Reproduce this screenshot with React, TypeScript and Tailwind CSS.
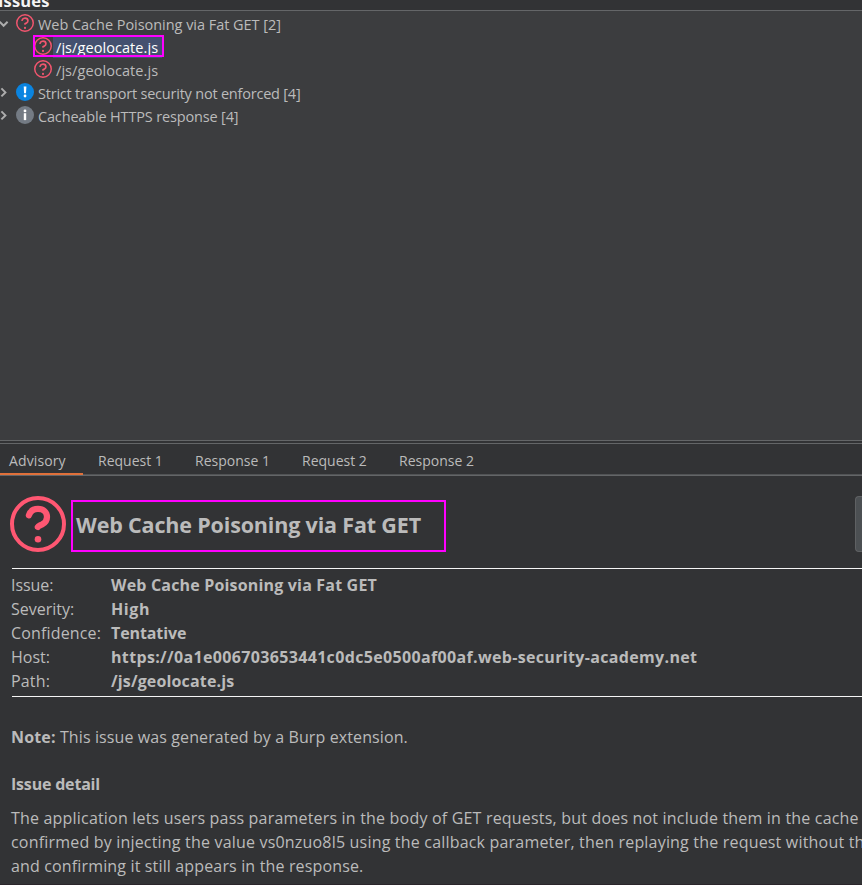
import type { ReactNode } from "react";

function QuestionIcon({ size, stroke, color }: { size: number; stroke: number; color: string }) {
  return (
    <svg width={size} height={size} viewBox="0 0 56 56" fill="none" className="block shrink-0" stroke={color}>
      <circle cx="28" cy="28" r={28 - stroke / 2} strokeWidth={stroke} />
      <path
        d="M18.9 19.3C20.3 15.1 24 12.9 28 12.9C33.6 12.9 37 16.6 37 21C37 24.6 35 26.8 32.4 28.2C30.2 29.4 28.3 29.9 27.8 31"
        strokeWidth={size > 20 ? 6.2 : 5.4}
        strokeLinecap="round"
        strokeLinejoin="round"
      />
      <circle cx="28" cy="43.2" r="3.3" fill={color} stroke="none" />
    </svg>
  );
}

function LowIcon() {
  return (
    <svg width="18" height="18" viewBox="0 0 18 18" className="block shrink-0">
      <circle cx="9" cy="9" r="9" fill="#0a84e0" />
      <path d="M7.7 3.4h2.7l-.4 6.8H8.1z" fill="#fff" />
      <circle cx="9.05" cy="13" r="1.4" fill="#fff" />
    </svg>
  );
}

function InfoIcon() {
  return (
    <svg width="18" height="18" viewBox="0 0 18 18" className="block shrink-0">
      <circle cx="9" cy="9" r="9" fill="#747b84" />
      <circle cx="9" cy="4.9" r="1.4" fill="#fff" />
      <path d="M7.8 7.2h2.4v6.9H7.8z" fill="#fff" />
    </svg>
  );
}

function Chevron({ open = false }: { open?: boolean }) {
  return (
    <svg width="16" height="18" viewBox="0 0 16 18" className="block shrink-0" fill="none" stroke="#adadad" strokeWidth="2">
      <path d={open ? "M-0.4 7.8L3.6 11.8L7.6 7.8" : "M1.4 5.4L5.4 9.4L1.4 13.4"} />
    </svg>
  );
}

function TreeRow({ children }: { children: ReactNode }) {
  return <div className="flex h-[23px] items-start pt-[2px]">{children}</div>;
}

const pink = "#f2566f";

function Label({ text, spacing, className = "pl-1" }: { text: string; spacing: string; className?: string }) {
  return <span className={`-mt-px h-[22px] text-[14.5px] leading-[23px] ${spacing} ${className}`}>{text}</span>;
}

const tabs = [
  { text: "Advisory", style: "w-[83px] pl-[9px] tracking-[0.12px]" },
  { text: "Request 1", style: "w-[97px] pl-[15px]" },
  { text: "Response 1", style: "w-[107px] pl-[15px]" },
  { text: "Request 2", style: "w-[97px] pl-[15px]" },
  { text: "Response 2", style: "w-[97px] pl-[15px]" },
];

const fields = [
  { name: "Issue:", nameStyle: "tracking-[-0.05px]", value: "Web Cache Poisoning via Fat GET", style: "tracking-[0.18px]" },
  { name: "Severity:", nameStyle: "", value: "High", style: "tracking-[0.6px]" },
  { name: "Confidence:", nameStyle: "tracking-[0.15px]", value: "Tentative", style: "tracking-[-0.1px]" },
  {
    name: "Host:",
    nameStyle: "",
    value: "https://0a1e006703653441c0dc5e0500af00af.web-security-academy.net",
    style: "tracking-[0.34px]",
  },
  { name: "Path:", nameStyle: "tracking-[0.15px]", value: "/js/geolocate.js", style: "tracking-[0.15px]" },
];

export default function App() {
  return (
    <div className="flex h-[885px] w-[862px] flex-col overflow-hidden whitespace-nowrap border-b border-[#2b262b] bg-[#323335] font-['Open_Sans',sans-serif] text-[#bbbbbb]">
      <header className="flex h-[10px] shrink-0 items-end overflow-hidden">
        <h2 className="-ml-[2px] mb-[-3px] text-[16.5px] font-bold leading-6 tracking-[0.15px] text-[#f4f4f4]">Issues</h2>
      </header>

      <section className="h-[431px] shrink-0 border-y border-[#646668] bg-[#3c3d3f] pt-px">
        <TreeRow>
          <Chevron open />
          <QuestionIcon size={18} stroke={4.6} color={pink} />
          <Label text="Web Cache Poisoning via Fat GET [2]" spacing="tracking-[-0.04px]" />
        </TreeRow>
        <div className="ml-[33px] flex h-[23px] w-[131px] items-start">
          <div className="relative flex h-[23px] w-full">
            <div className="w-5 pl-px pt-[2px]">
              <QuestionIcon size={18} stroke={4.6} color={pink} />
            </div>
            <div className="w-[109px] bg-[#44506f] pl-[3px] text-[14.5px] leading-[25px] tracking-[0.07px] text-white">
              <span className="block h-[23px]">/js/geolocate.js</span>
            </div>
            <div className="absolute inset-x-0 top-0 h-[22px] border-2 border-[#ff00ff]" />
          </div>
        </div>
        <div className="flex h-[23px] items-start pl-[34px] pt-[2px]">
          <QuestionIcon size={18} stroke={4.6} color={pink} />
          <Label text="/js/geolocate.js" spacing="tracking-[0.07px]" />
        </div>
        <TreeRow>
          <Chevron />
          <LowIcon />
          <Label text="Strict transport security not enforced [4]" spacing="tracking-[-0.21px]" />
        </TreeRow>
        <TreeRow>
          <Chevron />
          <InfoIcon />
          <Label text="Cacheable HTTPS response [4]" spacing="tracking-[-0.16px]" />
        </TreeRow>
      </section>

      <nav className="mt-[2px] h-[33px] shrink-0 border-t border-[#646668]">
        <div className="flex h-[31px] border-b border-[#515355]">
          {tabs.map((tab, i) => (
            <div
              key={tab.text}
              className={`shrink-0 pt-[5px] text-[14px] leading-6 ${tab.style} ${
                i === 0 ? "-mb-px h-[31px] border-b-2 border-[#e0703a]" : "h-[30px]"
              }`}
            >
              {tab.text}
            </div>
          ))}
        </div>
        <div className="h-px bg-[#646668]" />
      </nav>

      <main className="flex grow flex-col pl-[11px] pt-5">
        <div className="-ml-px flex h-14 shrink-0 items-start">
          <QuestionIcon size={56} stroke={4} color="#ff5772" />
          <h1 className="ml-[5px] mt-1 h-[52px] w-[375px] border-2 border-[#ff00ff] pl-[3px] text-[21.5px] font-bold leading-[45px] tracking-[-0.16px]">
            Web Cache Poisoning via Fat GET
          </h1>
          <div className="ml-auto h-14 w-[7px] rounded-l-[4px] border-y border-l border-[#5f6163] bg-[#4c5053]" />
        </div>

        <dl className="ml-px mt-4 h-[129px] shrink-0 border-y border-[#f5f5f5] pt-1 text-[16px] leading-6">
          {fields.map((field) => (
            <div key={field.name} className="-ml-px flex">
              <dt className={`w-[100px] shrink-0 ${field.nameStyle}`}>{field.name}</dt>
              <dd className={`font-bold ${field.style}`}>{field.value}</dd>
            </div>
          ))}
        </dl>

        <p className="mt-7 text-[16px] leading-6 tracking-[0.11px]">
          <b className="tracking-[0.15px]">Note:</b> This issue was generated by a Burp extension.
        </p>
        <h3 className="mt-[23px] text-[16px] font-bold leading-6 tracking-[-0.19px]">Issue detail</h3>
        <div className="mt-[10px] text-[16px] leading-6">
          <p className="tracking-[0.19px]">
            The application lets users pass parameters in the body of GET requests, but does not include them in the cache
          </p>
          <p className="-mr-10 tracking-[0.19px]">
            confirmed by injecting the value vs0nzuo8l5 using the callback parameter, then replaying the request without the
          </p>
          <p className="tracking-[0.15px]">and confirming it still appears in the response.</p>
        </div>
      </main>
    </div>
  );
}
